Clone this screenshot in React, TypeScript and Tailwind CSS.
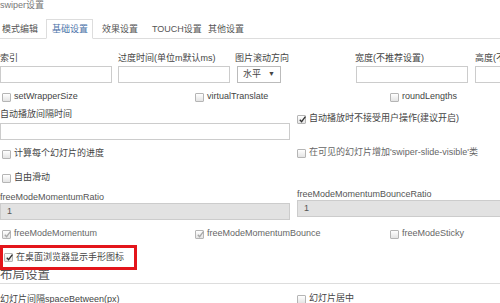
import React from "react";

const font = { fontFamily: '"Liberation Sans", "Noto Sans CJK SC", sans-serif' };

function Box({ checked = false, faint = false }: { checked?: boolean; faint?: boolean }) {
  return (
    <span className="relative inline-block w-[9px] h-[9px] shrink-0 border border-[#b5b5b5] rounded-[1px] bg-gradient-to-b from-white to-[#e4e4e4]">
      {checked && (
        <svg viewBox="0 0 10 10" className="absolute left-[0px] top-[-1px] w-[9px] h-[9px]">
          <path d="M2 5.2 L4 7.4 L8.2 1.8" fill="none" stroke={faint ? "#a8a8a8" : "#333"} strokeWidth="1.5" />
        </svg>
      )}
    </span>
  );
}

function Check({ label, checked = false, faint = false, className = "" }: { label: string; checked?: boolean; faint?: boolean; className?: string }) {
  return (
    <div className={"flex items-center gap-[3px] h-[12px] " + className}>
      <Box checked={checked} faint={faint} />
      <span className={faint ? "text-[#666]" : "text-[#444]"}>{label}</span>
    </div>
  );
}

export default function App() {
  return (
    <div className="w-[500px] h-[303px] overflow-hidden bg-white text-[9px] text-[#444] whitespace-nowrap" style={font}>
      <div className="w-[640px]">
        <div className="h-[19px] leading-[10px] text-[#777]">swiper设置</div>
        <div className="flex h-[20px] border-b border-[#ddd] text-[#555]">
          <div className="w-[46px] pl-[2px] leading-[20px]">模式编辑</div>
          <div className="w-[47px] pl-[5px] leading-[18px] h-[20px] border border-[#ddd] border-b-white bg-white text-[#4a72a8]">基础设置</div>
          <div className="w-[52px] pl-[9px] leading-[20px]">效果设置</div>
          <div className="w-[63px] pl-[7px] leading-[20px]">TOUCH设置</div>
          <div className="leading-[20px]">其他设置</div>
        </div>

        <div className="mt-[13px] flex">
          <div className="w-[118px] flex flex-col gap-[2px]">
            <div className="h-[12px] leading-[12px]">索引</div>
            <div className="w-[112px] h-[17px] border border-[#ccc]" />
          </div>
          <div className="w-[117px] flex flex-col gap-[2px]">
            <div className="h-[12px] leading-[12px]">过度时间(单位m默认ms)</div>
            <div className="w-[112px] h-[17px] border border-[#ccc]" />
          </div>
          <div className="w-[120px] flex flex-col gap-[2px]">
            <div className="h-[12px] leading-[12px]">图片滚动方向</div>
            <div className="ml-[2px] w-[44px] h-[17px] border border-[#bbb] flex items-center justify-between px-[5px]">
              <span>水平</span>
              <span className="text-[7px]">▼</span>
            </div>
          </div>
          <div className="w-[120px] flex flex-col gap-[2px]">
            <div className="h-[12px] leading-[12px]">宽度(不推荐设置)</div>
            <div className="ml-[1px] w-[112px] h-[17px] border border-[#ccc]" />
          </div>
          <div className="w-[120px] flex flex-col gap-[2px]">
            <div className="h-[12px] leading-[12px]">高度(不推荐设置)</div>
            <div className="w-[112px] h-[17px] border border-[#ccc]" />
          </div>
        </div>

        <div className="mt-[8px] flex">
          <Check label="setWrapperSize" className="w-[195px] pl-[2px]" />
          <Check label="virtualTranslate" className="w-[195px]" />
          <Check label="roundLengths" />
        </div>

        <div className="flex">
          <div className="w-[297px] flex flex-col">
            <div className="mt-[5px] h-[12px] leading-[12px]">自动播放间隔时间</div>
            <div className="mt-[3px] w-[290px] h-[17px] border border-[#ccc]" />
            <Check label="计算每个幻灯片的进度" className="mt-[8px] pl-[2px]" />
            <Check label="自由滑动" className="mt-[12px] pl-[2px]" />
            <div className="mt-[7px] h-[12px] leading-[12px] text-[#555]">freeModeMomentumRatio</div>
            <div className="w-[290px] h-[17px] border border-[#ccc] bg-[#e2e2e2] pl-[6px] leading-[15px] text-[#555]">1</div>
          </div>
          <div className="flex-1 flex flex-col">
            <Check label="自动播放时不接受用户操作(建议开启)" checked className="mt-[10px]" />
            <Check label="在可见的幻灯片增加'swiper-slide-visible'类" className="mt-[22px]" faint />
            <div className="mt-[29px] h-[12px] leading-[12px] text-[#555]">freeModeMomentumBounceRatio</div>
            <div className="w-[300px] h-[17px] border border-[#ccc] bg-[#e2e2e2] pl-[6px] leading-[15px] text-[#555]">1</div>
          </div>
        </div>

        <div className="mt-[8px] flex">
          <Check label="freeModeMomentum" checked faint className="w-[195px] pl-[2px]" />
          <Check label="freeModeMomentumBounce" checked faint className="w-[195px]" />
          <Check label="freeModeSticky" faint />
        </div>

        <div className="relative mt-[10px] h-[15px]">
          <Check label="在桌面浏览器显示手形图标" checked className="pl-[4px] h-[15px]" />
          <div className="absolute left-0 top-[-5px] w-[137px] h-[25px] border-[3px] border-[#e3151b]" />
        </div>

        <div className="mt-[2px] h-[16px] leading-[16px] text-[12.5px] text-[#555] border-b border-[#ddd] box-content">布局设置</div>

        <div className="mt-[9px] flex">
          <div className="w-[297px] h-[12px] leading-[12px]">幻灯片间隔spaceBetween(px)</div>
          <Check label="幻灯片居中" />
        </div>
      </div>
    </div>
  );
}
